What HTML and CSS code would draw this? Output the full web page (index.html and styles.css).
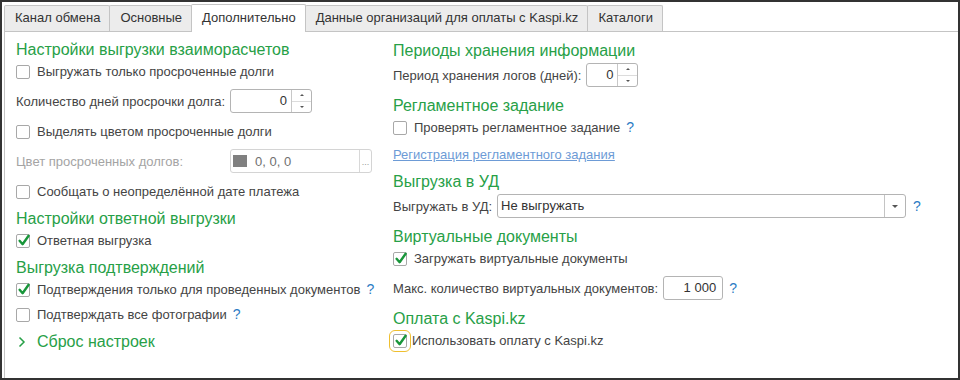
FILE: index.html
```html
<!DOCTYPE html>
<html lang="ru">
<head>
<meta charset="utf-8">
<title>Дополнительно</title>
<link rel="stylesheet" href="styles.css">
</head>
<body>
<div class="window">
  <div class="tabs">
    <div class="tab">Канал обмена</div>
    <div class="tab">Основные</div>
    <div class="tab active">Дополнительно</div>
    <div class="tab">Данные организаций для оплаты с Kaspi.kz</div>
    <div class="tab">Каталоги</div>
  </div>
  <div class="panel">
    <div class="col">
      <section class="group">
        <h2 class="group-title">Настройки выгрузки взаиморасчетов</h2>
        <div class="rows">
          <div class="check"><span class="box"></span>Выгружать только просроченные долги</div>
          <div class="field">
            <span class="field-label">Количество дней просрочки долга:</span>
            <div class="num num-wide"><span class="num-value">0</span><span class="spin"><span><i class="up"></i></span><span><i class="down"></i></span></span></div>
          </div>
          <div class="check"><span class="box"></span>Выделять цветом просроченные долги</div>
          <div class="field">
            <span class="field-label disabled">Цвет просроченных долгов:</span>
            <div class="color-input"><span class="swatch"></span><span class="color-value">0, 0, 0</span><span class="dots">...</span></div>
          </div>
          <div class="check"><span class="box"></span>Сообщать о неопределённой дате платежа</div>
        </div>
      </section>
      <section class="group">
        <h2 class="group-title">Настройки ответной выгрузки</h2>
        <div class="rows">
          <div class="check"><span class="box checked"><svg viewBox="0 0 14 14" width="14" height="14"><path d="M2.6 6.8 L5.6 10.2 L11.6 1.8" fill="none" stroke="#18963a" stroke-width="2.4" stroke-linecap="round" stroke-linejoin="round"/></svg></span>Ответная выгрузка</div>
        </div>
      </section>
      <section class="group">
        <h2 class="group-title">Выгрузка подтверждений</h2>
        <div class="rows rows-tight">
          <div class="check"><span class="box checked"><svg viewBox="0 0 14 14" width="14" height="14"><path d="M2.6 6.8 L5.6 10.2 L11.6 1.8" fill="none" stroke="#18963a" stroke-width="2.4" stroke-linecap="round" stroke-linejoin="round"/></svg></span>Подтверждения только для проведенных документов<span class="help">?</span></div>
          <div class="check"><span class="box"></span>Подтверждать все фотографии<span class="help">?</span></div>
        </div>
      </section>
      <div class="collapse">
        <svg class="chevron" viewBox="0 0 8 12" width="8" height="12"><path d="M1.5 1.5 L6 6 L1.5 10.5" fill="none" stroke="#27a047" stroke-width="1.5"/></svg>
        Сброс настроек
      </div>
    </div>

    <div class="col col-right">
      <section class="group">
        <h2 class="group-title">Периоды хранения информации</h2>
        <div class="rows">
          <div class="field">
            <span class="inline-label">Период хранения логов (дней):</span>
            <div class="num num-small"><span class="num-value">0</span><span class="spin"><span><i class="up"></i></span><span><i class="down"></i></span></span></div>
          </div>
        </div>
      </section>
      <section class="group">
        <h2 class="group-title">Регламентное задание</h2>
        <div class="rows">
          <div class="check"><span class="box"></span>Проверять регламентное задание<span class="help">?</span></div>
          <div class="link-row"><a class="link">Регистрация регламентного задания</a></div>
        </div>
      </section>
      <section class="group">
        <h2 class="group-title">Выгрузка в УД</h2>
        <div class="rows">
          <div class="field">
            <span class="inline-label">Выгружать в УД:</span>
            <div class="select"><span class="select-value">Не выгружать</span><span class="select-btn"><i class="down"></i></span></div>
            <span class="help help-wide">?</span>
          </div>
        </div>
      </section>
      <section class="group">
        <h2 class="group-title">Виртуальные документы</h2>
        <div class="rows">
          <div class="check"><span class="box checked"><svg viewBox="0 0 14 14" width="14" height="14"><path d="M2.6 6.8 L5.6 10.2 L11.6 1.8" fill="none" stroke="#18963a" stroke-width="2.4" stroke-linecap="round" stroke-linejoin="round"/></svg></span>Загружать виртуальные документы</div>
          <div class="field">
            <span class="inline-label">Макс. количество виртуальных документов:</span>
            <div class="num num-plain"><span class="num-value">1 000</span></div>
            <span class="help">?</span>
          </div>
        </div>
      </section>
      <section class="group">
        <h2 class="group-title">Оплата с Kaspi.kz</h2>
        <div class="rows">
          <div class="check check-tight"><span class="box checked focused"><svg viewBox="0 0 14 14" width="14" height="14"><path d="M2.6 6.8 L5.6 10.2 L11.6 1.8" fill="none" stroke="#18963a" stroke-width="2.4" stroke-linecap="round" stroke-linejoin="round"/></svg></span>Использовать оплату с Kaspi.kz</div>
        </div>
      </section>
    </div>
  </div>
</div>
</body>
</html>
```

FILE: styles.css
```css
* { box-sizing: border-box; }
html, body { margin: 0; padding: 0; background: #fff; }
body {
  font-family: "Liberation Sans", Arial, sans-serif;
  font-size: 13px;
  color: #444;
}
.window {
  width: 960px;
  height: 380px;
  border: 2px solid #333;
  padding: 2px 0 0 2px;
  display: flex;
  flex-direction: column;
  overflow: hidden;
  background: #fff;
}
.tabs {
  display: flex;
  align-items: flex-end;
  height: 27px;
  flex: none;
}
.tab {
  height: 26px;
  padding: 0 9px 0 10px;
  border: 1px solid #c4c4c4;
  border-bottom: none;
  border-radius: 2px 2px 0 0;
  background: #ececec;
  line-height: 24px;
  color: #333;
  margin-left: -1px;
  white-space: nowrap;
}
.tab:first-child { margin-left: 0; }
.tab.active {
  height: 28px;
  margin-bottom: -1px;
  background: #fff;
  position: relative;
  z-index: 1;
  line-height: 26px;
}
.panel {
  flex: 1;
  border-top: 1px solid #c4c4c4;
  border-left: 1px solid #c4c4c4;
  display: grid;
  grid-template-columns: 377px 1fr;
  align-items: start;
  padding: 8px 0 0 11px;
}
.col {
  display: flex;
  flex-direction: column;
  gap: 9px;
}
.col-right { padding-top: 1px; }
.group { display: flex; flex-direction: column; }
.group-title {
  margin: 0 0 2px;
  font-size: 16px;
  font-weight: normal;
  line-height: 20px;
  height: 20px;
  color: #27a047;
  white-space: nowrap;
}
.rows { display: flex; flex-direction: column; gap: 9px; }
.rows-tight { gap: 7px; }
.check {
  display: flex;
  align-items: center;
  height: 18px;
  gap: 7px;
  white-space: nowrap;
}
.box {
  width: 14px;
  height: 14px;
  border: 1px solid #a8a8a8;
  border-radius: 2px;
  background: #fff;
  flex: none;
  margin-top: 2px;
  position: relative;
}
.box svg {
  position: absolute;
  left: 0;
  top: -1px;
  overflow: visible;
}
.box.focused {
  outline: 1px solid #efbf2f;
  outline-offset: 3px;
}
.help {
  color: #2c7cc4;
  font-size: 14px;
  margin-left: -1px;
}
.field .help { margin-left: 6px; }
.field .help-wide { margin-left: 7px; }
.field {
  display: flex;
  align-items: center;
  height: 24px;
  white-space: nowrap;
}
.field-label { width: 214px; flex: none; }
.field-label.disabled { color: #a4a4a4; }
.inline-label { margin-right: 5px; }
.num {
  height: 24px;
  border: 1px solid #b4b4b4;
  border-radius: 3px;
  display: flex;
  background: #fff;
}
.num-wide { width: 82px; }
.num-small { width: 52px; }
.num-plain { width: 60px; }
.num-value {
  flex: 1;
  text-align: right;
  padding-right: 4px;
  line-height: 22px;
  color: #333;
}
.num-plain .num-value { padding-right: 6px; }
.spin {
  width: 20px;
  border-left: 1px solid #c8c8c8;
  display: flex;
  flex-direction: column;
}
.spin span {
  flex: 1;
  display: flex;
  align-items: center;
  justify-content: center;
}
.spin span + span { border-top: 1px solid #dcdcdc; }
.up, .down {
  display: block;
  width: 0;
  height: 0;
  border-left: 2px solid transparent;
  border-right: 2px solid transparent;
}
.up { border-bottom: 2px solid #555; }
.down { border-top: 2px solid #555; }
.color-input {
  width: 142px;
  height: 24px;
  border: 1px solid #d4d4d4;
  border-radius: 3px;
  display: flex;
  align-items: center;
  padding-left: 2px;
}
.swatch {
  width: 14px;
  height: 12px;
  background: #808080;
  flex: none;
}
.color-value {
  flex: 1;
  color: #707070;
  padding-left: 8px;
}
.dots {
  width: 12px;
  align-self: stretch;
  border-left: 1px solid #d8d8d8;
  color: #999;
  font-size: 9px;
  line-height: 24px;
  text-align: center;
  overflow: hidden;
}
.link-row { height: 18px; display: flex; align-items: center; }
.link {
  color: #6d9bd6;
  text-decoration: underline;
}
.select {
  width: 409px;
  height: 24px;
  border: 1px solid #b4b4b4;
  border-radius: 3px;
  display: flex;
  background: #fff;
}
.select-value {
  flex: 1;
  padding-left: 3px;
  line-height: 22px;
  color: #333;
}
.select-btn {
  width: 21px;
  border-left: 1px solid #c4c4c4;
  display: flex;
  align-items: center;
  justify-content: center;
}
.select-btn .down {
  border-left-width: 3px;
  border-right-width: 3px;
  border-top-width: 3px;
}
.collapse {
  display: flex;
  align-items: center;
  height: 20px;
  font-size: 16px;
  color: #27a047;
  white-space: nowrap;
}
.chevron { margin: 0 11px 0 2px; flex: none; }
.check-tight { gap: 5px; }
```
